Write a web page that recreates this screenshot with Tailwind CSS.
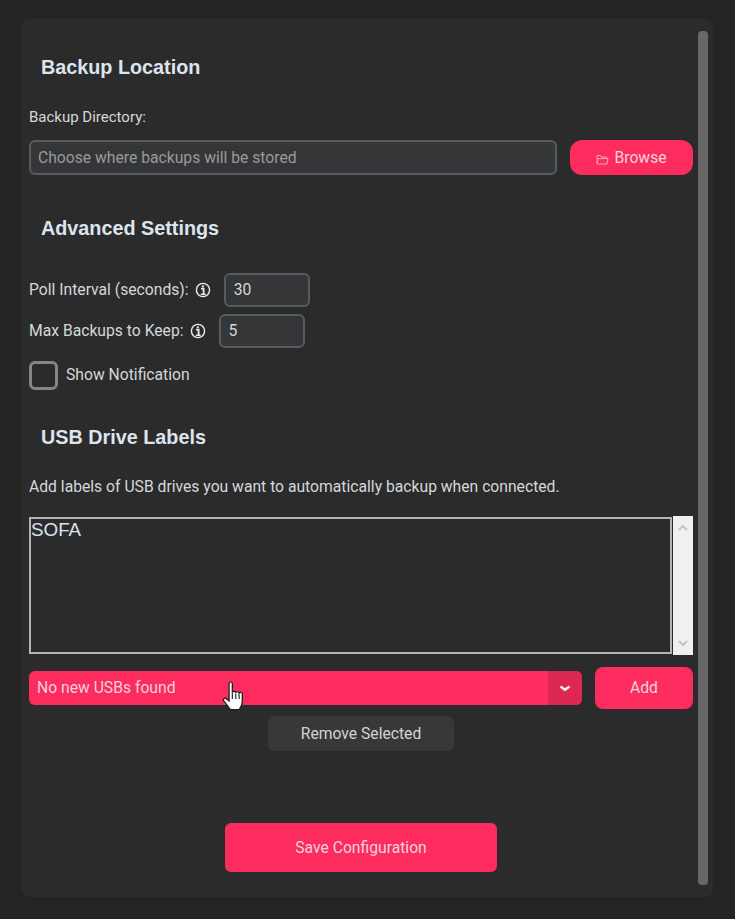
<!DOCTYPE html>
<html lang="en">
  <head>
    <meta charset="UTF-8" />
    <meta name="viewport" content="width=device-width, initial-scale=1.0" />
    <title>Backup Settings</title>
    <script src="https://cdn.jsdelivr.net/npm/@tailwindcss/browser@4"></script>
  </head>
  <body class="h-[919px] overflow-hidden bg-[#242424] font-['Roboto',sans-serif] text-[15.7px] text-[#d4d8dc]">
    <main class="relative ml-[21px] mt-[19px] flex h-[878px] w-[692px] flex-col rounded-lg bg-[#2b2b2b] pl-2 pr-5">
      <!-- scrollbar -->
      <div class="absolute left-[677px] top-3 h-[854px] w-[10px] rounded-[4px] bg-[#676767]"></div>

      <h2 class="mt-9 ml-3 h-6 font-['Liberation_Sans',sans-serif] text-[19.8px] leading-6 font-bold text-[#dce4ee]">Backup Location</h2>
      <label class="mt-[30px] h-4 text-[15px] leading-4">Backup Directory:</label>
      <div class="mt-[15px] flex h-[35px] gap-[13px]">
        <div class="flex w-[528px] items-center rounded-md border-2 border-[#565b5e] bg-[#343638] pl-[7px] text-[#9a9a9a]">Choose where backups will be stored</div>
        <button class="flex flex-1 items-center justify-center gap-[5px] rounded-xl bg-[#ff2d5f] text-[#fbd0dc]">
          <svg class="mt-1" width="13" height="11" viewBox="0 0 13 11" fill="none" stroke="#f9a5bc" stroke-width="1"><path d="M1 9.5V1.5h3.5l1 1.5h5v1.5M1 9.5l1.2-5h9.8l-1 5.5H1.5z" /></svg>
          Browse
        </button>
      </div>

      <h2 class="mt-[41px] ml-3 h-6 font-['Liberation_Sans',sans-serif] text-[19.8px] leading-6 font-bold text-[#dce4ee]">Advanced Settings</h2>
      <div class="mt-[33px] flex h-[34px] items-center">
        <span>Poll Interval (seconds):</span>
        <svg class="ml-[6px]" width="16" height="16" viewBox="0 0 16 16" fill="none" stroke="#ececec"><circle cx="8" cy="8" r="6.6" stroke-width="1.4" /><path d="M7.9 3.400v1.800" stroke-width="2" /><path d="M6 6.600h2.600v5.800" stroke-width="1.800" /><path d="M5.800 12.300h4.800" stroke-width="1.400" /></svg>
        <div class="ml-[13px] flex h-[34px] w-[86px] items-center rounded-md border-2 border-[#565b5e] bg-[#343638] px-2">30</div>
      </div>
      <div class="mt-[7px] flex h-[34px] items-center">
        <span>Max Backups to Keep:</span>
        <svg class="ml-[6px]" width="16" height="16" viewBox="0 0 16 16" fill="none" stroke="#ececec"><circle cx="8" cy="8" r="6.6" stroke-width="1.4" /><path d="M7.9 3.400v1.800" stroke-width="2" /><path d="M6 6.600h2.600v5.800" stroke-width="1.800" /><path d="M5.800 12.300h4.800" stroke-width="1.400" /></svg>
        <div class="ml-[13px] flex h-[34px] w-[86px] items-center rounded-md border-2 border-[#565b5e] bg-[#343638] px-2">5</div>
      </div>
      <div class="mt-[13px] flex h-[29px] items-center gap-2">
        <div class="size-[29px] rounded-md border-[3px] border-[#858585]"></div>
        <span class="-mt-px">Show Notification</span>
      </div>

      <h2 class="mt-[35px] ml-3 h-6 font-['Liberation_Sans',sans-serif] text-[19.8px] leading-6 font-bold text-[#dce4ee]">USB Drive Labels</h2>
      <p class="mt-[30px] h-4 leading-4">Add labels of USB drives you want to automatically backup when connected.</p>
      <div class="mt-[21px] flex h-[139px]">
        <div class="my-px w-[643px] border-2 border-[#b4b4b4] font-['Liberation_Sans',sans-serif] text-[18.8px] leading-[22px] text-[#dce4ee]">SOFA</div>
        <div class="ml-px flex w-5 flex-col items-center justify-between bg-[#f0f0f0] py-2">
          <svg width="10" height="7" viewBox="0 0 10 7" fill="none" stroke="#c4c4c4" stroke-width="2"><path d="M1 6l4-4 4 4" /></svg>
          <svg width="10" height="7" viewBox="0 0 10 7" fill="none" stroke="#c4c4c4" stroke-width="2"><path d="M1 1l4 4 4-4" /></svg>
        </div>
      </div>
      <div class="mt-3 flex h-[42px] items-center gap-[13px]">
        <div class="flex h-[34px] w-[553px] overflow-hidden rounded-md bg-[#ff2d5f] text-[#fbd0dc]">
          <div class="flex flex-1 items-center pl-2">No new USBs found</div>
          <div class="flex w-[34px] items-center justify-center bg-[#dc2853]">
            <svg width="12" height="7" viewBox="0 0 12 7" fill="none" stroke="#f4f0f2" stroke-width="2.4"><path d="M1.5 1.5L6 4.8l4.5-3.3" /></svg>
          </div>
        </div>
        <button class="h-[42px] flex-1 rounded-lg bg-[#ff2d5f] text-[#fbd0dc]">Add</button>
      </div>
      <button class="mx-auto mt-[7px] h-[35px] w-[186px] rounded-md bg-[#383838] text-[#d0d4d8]">Remove Selected</button>
      <button class="mx-auto mt-[72px] h-[49px] w-[272px] rounded-md bg-[#ff2d5f] text-[#fbd0dc]">Save Configuration</button>

      <!-- mouse cursor -->
      <svg class="absolute left-[201px] top-[662px]" width="25" height="31" viewBox="0 0 23 31" preserveAspectRatio="none">
        <path d="M6.500 2.500c0-2 3-2 3 0v9c.5-1.500 3-1.500 3.200.3.4-1.500 3-1.400 3.100.4.6-1.200 2.900-.9 2.900.9v7.400c0 3.500-1.800 6.500-2.800 8H7.500c-1.500-2.200-3-5-5.800-8.500-1.300-1.700.7-3.600 2.300-2.300l2.500 2.300z" fill="#fff" stroke="#1c1c1c" stroke-width="1.200" />
        <path d="M9.500 12v6M12.700 12.500v5.500M15.800 13.500v4.500" stroke="#1c1c1c" stroke-width="1" fill="none" />
      </svg>
    </main>
  </body>
</html>
